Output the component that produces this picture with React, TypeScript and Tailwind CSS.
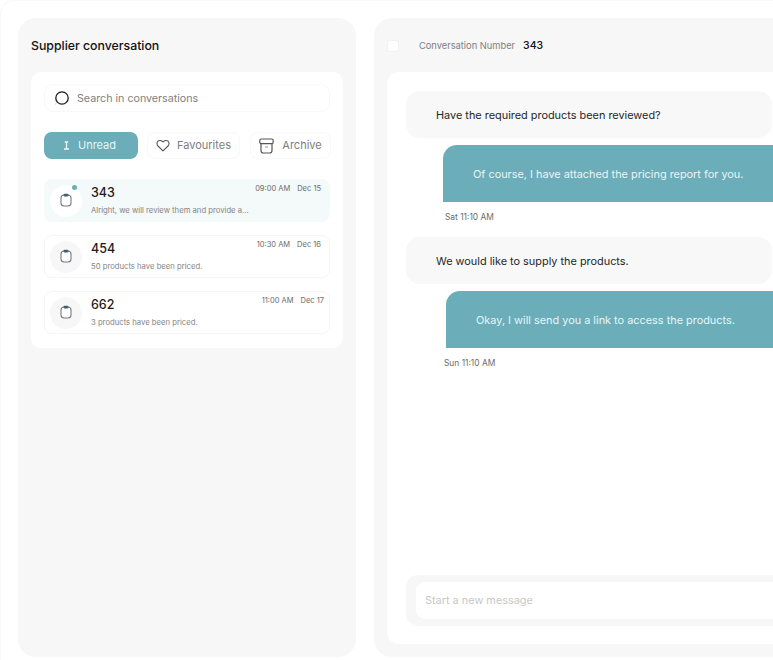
import React from "react";

const font = { fontFamily: '"Inter", "Noto Sans", sans-serif' };

function Jar() {
  return (
    <svg width="12" height="14" viewBox="0 0 12 14" fill="none" className="mb-[2px]">
      <rect x="1" y="2" width="10" height="11" rx="3" fill="#ffffff" stroke="#777b80" strokeWidth="1.1" />
      <rect x="3.5" y="0.8" width="5" height="2.6" rx="1.2" fill="#47606b" />
    </svg>
  );
}

function Row({ num, time, date, text, active, dateExtra }: { num: string; time: string; date: string; text: string; active?: boolean; dateExtra?: boolean }) {
  return (
    <div className={`relative flex h-[43px] w-[286px] items-stretch rounded-[8px] border ${active ? "border-[#f4f9f9] bg-[#f4f9f9]" : "border-[#f6f6f6] bg-white"}`}>
      <div className={`ml-[5px] mt-[5px] flex h-[32px] w-[32px] shrink-0 items-center justify-center rounded-full ${active ? "bg-white" : "bg-[#f7f7f7]"}`}>
        <Jar />
      </div>
      {active && <span className="absolute left-[27px] top-[5px] h-[5px] w-[5px] rounded-full bg-[#6badb8]" />}
      <div className="ml-[9px] min-w-0 flex-1">
        <div className="mt-[3px] text-[12.5px] leading-[20px] font-medium text-[#1c1c1c]">{num}</div>
        <div className="mt-[3px] text-[7.7px] leading-[10px] text-[#858585]">{text}</div>
      </div>
      <div className={`mt-[3px] flex h-[12px] gap-[7px] text-[7.5px] leading-[12px] text-[#6b6b6b] ${dateExtra ? "mr-[5px]" : "mr-[8px]"}`}>
        <span>{time}</span>
        <span>{date}</span>
      </div>
    </div>
  );
}

function Tab({ w, gap, icon, label }: { w: string; gap: string; icon: React.ReactNode; label: string }) {
  return (
    <div className={`flex h-[27px] shrink-0 items-center justify-center rounded-[8px] border border-[#f8f8f8] bg-white text-[11px] text-[#7d7d7d] ${w} ${gap}`}>
      {icon}
      <span>{label}</span>
    </div>
  );
}

function Outgoing({ ml, text, pl }: { ml: string; text: string; pl: string }) {
  return (
    <div className={`flex h-[57px] w-[400px] shrink-0 items-center rounded-tl-[14px] bg-[#6badb8] pt-[1px] text-[10.9px] text-[#e8f5f7] ${ml} ${pl}`}>
      <span className="whitespace-nowrap">{text}</span>
    </div>
  );
}

function Incoming({ text }: { text: string }) {
  return (
    <div className="flex h-[47px] w-[366px] shrink-0 items-center rounded-[14px] bg-[#f8f8f8] pl-[30px] pt-[2px] text-[10.9px] text-[#262626]">
      <span className="whitespace-nowrap">{text}</span>
    </div>
  );
}

export default function App() {
  return (
    <div style={font} className="h-[660px] w-[773px] overflow-hidden bg-white">
      <div className="flex h-[660px] gap-[18px] rounded-tl-[14px] border-t border-l border-[#f8f8f8] pt-[17px] pl-[17px]">
        <aside className="flex h-[639px] w-[338px] shrink-0 flex-col rounded-[18px] bg-[#f7f7f7] px-[13px]">
          <h1 className="mt-[19px] h-[18px] text-[12.3px] leading-[18px] font-medium text-[#111111]">Supplier conversation</h1>
          <div className="mt-[17px] flex h-[276px] flex-col rounded-[10px] bg-white px-[13px] pt-[12px]">
            <div className="flex h-[28px] w-[286px] items-center rounded-[9px] border border-[#f8f8f8] pl-[9px]">
              <svg width="16" height="16" viewBox="0 0 16 16" fill="none">
                <circle cx="8" cy="8" r="6.2" stroke="#1b1b1b" strokeWidth="1.3" />
                <path d="M2.6 13 L1.4 14.2" stroke="#c9c9c9" strokeWidth="1" />
              </svg>
              <span className="ml-[7px] pt-[2px] text-[10.7px] text-[#808080]">Search in conversations</span>
            </div>
            <div className="mt-[20px] flex">
              <div className="flex h-[27px] w-[94px] shrink-0 items-center justify-center gap-[8px] rounded-[8px] bg-[#6badb8] pr-[3px] text-[11px] text-[#e8f5f7]">
                <svg width="7" height="9" viewBox="0 0 7 9" fill="none">
                  <path d="M1.8 1 H5.2 M3.5 1 V8 M1 8 H6" stroke="#eef7f8" strokeWidth="1.3" />
                </svg>
                <span>Unread</span>
              </div>
              <Tab
                w="ml-[9px] w-[93px]"
                gap="gap-[7px]"
                label="Favourites"
                icon={
                  <svg width="14" height="13" viewBox="0 0 14 13" fill="none">
                    <path d="M7 11.8 L2 7 C0.6 5.5 0.7 3.4 2 2.2 C3.4 1 5.6 1.2 7 3 C8.4 1.2 10.6 1 12 2.2 C13.3 3.4 13.4 5.5 12 7 Z" stroke="#555555" strokeWidth="1.1" strokeLinejoin="round" />
                  </svg>
                }
              />
              <Tab
                w="ml-[10px] w-[81px]"
                gap="gap-[8px]"
                label="Archive"
                icon={
                  <svg width="15" height="16" viewBox="0 0 15 16" fill="none">
                    <rect x="0.8" y="1" width="13.4" height="4.6" rx="1.4" stroke="#555555" strokeWidth="1.2" />
                    <path d="M2 5.6 V12.5 C2 14 3 15 4.4 15 H10.6 C12 15 13 14 13 12.5 V5.6" stroke="#555555" strokeWidth="1.2" />
                    <path d="M6 9 H9" stroke="#999999" strokeWidth="1" />
                  </svg>
                }
              />
            </div>
            <div className="mt-[20px] flex flex-col gap-[13px]">
              <Row active num="343" time="09:00 AM" date="Dec 15" text="Alright, we will review them and provide a..." />
              <Row num="454" time="10:30 AM" date="Dec 16" text="50 products have been priced." />
              <Row dateExtra num="662" time="11:00 AM" date="Dec 17" text="3 products have been priced." />
            </div>
          </div>
        </aside>

        <main className="flex h-[639px] w-[500px] shrink-0 flex-col rounded-[18px] bg-[#f7f7f7] pl-[13px]">
          <div className="flex h-[54px] items-center pt-[1px]">
            <span className="h-[12px] w-[12px] rounded-[3px] border border-[#f1f1f1] bg-white" />
            <span className="ml-[20px] text-[9.3px] text-[#808080]">Conversation Number</span>
            <span className="ml-[8px] text-[10.5px] font-medium text-[#111111]">343</span>
          </div>
          <div className="flex h-[572px] flex-col rounded-l-[12px] bg-white pl-[19px] pt-[19px]">
            <Incoming text="Have the required products been reviewed?" />
            <div className="mt-[7px]"><Outgoing ml="ml-[37px]" pl="pl-[30px]" text="Of course, I have attached the pricing report for you." /></div>
            <div className="mt-[10px] ml-[39px] h-[10px] text-[8.4px] leading-[10px] text-[#6b6b6b]">Sat 11:10 AM</div>
            <div className="mt-[15px]"><Incoming text="We would like to supply the products." /></div>
            <div className="mt-[7px]"><Outgoing ml="ml-[40px]" pl="pl-[30px]" text="Okay, I will send you a link to access the products." /></div>
            <div className="mt-[10px] ml-[38px] h-[10px] text-[8.4px] leading-[10px] text-[#6b6b6b]">Sun 11:10 AM</div>
            <div className="mt-[207px] flex h-[51px] w-[400px] items-center rounded-l-[12px] bg-[#f7f7f7] pl-[10px]">
              <div className="flex h-[37px] flex-1 items-center rounded-l-[9px] bg-white pl-[9px] text-[10.9px] text-[#c8c8c8]">Start a new message</div>
            </div>
          </div>
        </main>
      </div>
    </div>
  );
}
